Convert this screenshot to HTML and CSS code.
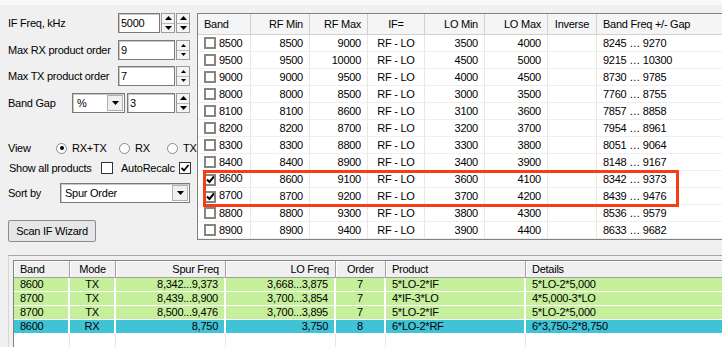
FILE: index.html
```html
<!DOCTYPE html>
<html lang="en">
<head>
    <meta charset="UTF-8">
    <title>Spur Calculator</title>
    <link rel="stylesheet" href="styles.css">
</head>
<body>
    <div class="topstrip"></div>
    <div class="main">
        <div class="side">
            <div class="field">
                <span class="lbl">IF Freq, kHz</span>
                <div class="input w42">5000</div>
                <div class="spin">
                    <div class="spin-btn"><svg width="7" height="4"><path d="M0 4L3.5 0L7 4Z"/></svg></div>
                    <div class="spin-btn"><svg width="7" height="4"><path d="M0 0L3.5 4L7 0Z"/></svg></div>
                </div>
                <div class="spin">
                    <div class="spin-btn"><svg width="7" height="4"><path d="M0 4L3.5 0L7 4Z"/></svg></div>
                    <div class="spin-btn"><svg width="7" height="4"><path d="M0 0L3.5 4L7 0Z"/></svg></div>
                </div>
            </div>
            <div class="field f2">
                <span class="lbl">Max RX product order</span>
                <div class="input w57">9</div>
                <div class="spin">
                    <div class="spin-btn"><svg width="5" height="3"><path d="M0 3L2.5 0L5 3Z"/></svg></div>
                    <div class="spin-btn"><svg width="5" height="3"><path d="M0 0L2.5 3L5 0Z"/></svg></div>
                </div>
            </div>
            <div class="field">
                <span class="lbl">Max TX product order</span>
                <div class="input w57">7</div>
                <div class="spin">
                    <div class="spin-btn"><svg width="5" height="3"><path d="M0 3L2.5 0L5 3Z"/></svg></div>
                    <div class="spin-btn"><svg width="5" height="3"><path d="M0 0L2.5 3L5 0Z"/></svg></div>
                </div>
            </div>
            <div class="field">
                <span class="lbl short">Band Gap</span>
                <div class="select w53">
                    <span class="select-text">%</span>
                    <span class="drop"><svg width="7" height="4"><path d="M0 0L3.5 4L7 0Z"/></svg></span>
                </div>
                <div class="input w48 gap2">3</div>
                <div class="spin gap2">
                    <div class="spin-btn"><svg width="7" height="4"><path d="M0 4L3.5 0L7 4Z"/></svg></div>
                    <div class="spin-btn"><svg width="7" height="4"><path d="M0 0L3.5 4L7 0Z"/></svg></div>
                </div>
            </div>

            <div class="opt-row view-row">
                <span class="view-lbl">View</span>
                <span class="radio on"></span><span class="opt-text w47">RX+TX</span>
                <span class="radio"></span><span class="opt-text w32">RX</span>
                <span class="radio"></span><span class="opt-text">TX</span>
            </div>
            <div class="opt-row check-row">
                <span class="opt-text pad1">Show all products</span>
                <span class="check"></span>
                <span class="opt-text auto">AutoRecalc</span>
                <span class="check on"><svg width="10" height="10"><path d="M1.5 5L4 7.5L8.5 2" fill="none" stroke="#000" stroke-width="1.8"/></svg></span>
            </div>
            <div class="field sort-row">
                <span class="lbl sort">Sort by</span>
                <div class="select w130">
                    <span class="select-text">Spur Order</span>
                    <span class="drop"><svg width="7" height="4"><path d="M0 0L3.5 4L7 0Z"/></svg></span>
                </div>
            </div>
            <button class="wizard">Scan IF Wizard</button>
        </div>

        <div class="bands">
            <table class="bands-table">
                <colgroup>
                    <col style="width:53px"><col style="width:59px"><col style="width:58px"><col style="width:57px">
                    <col style="width:60px"><col style="width:63px"><col style="width:49px"><col style="width:160px">
                </colgroup>
                <thead>
                    <tr>
                        <th class="l">Band</th><th class="r">RF Min</th><th class="r">RF Max</th><th class="c">IF=</th>
                        <th class="r">LO Min</th><th class="r">LO Max</th><th class="c">Inverse</th><th class="l">Band Freq +/- Gap</th>
                    </tr>
                </thead>
                <tbody>
                    <tr><td class="band"><span class="box"></span>8500</td><td class="r">8500</td><td class="r">9000</td><td class="c">RF - LO</td><td class="r">3500</td><td class="r">4000</td><td></td><td class="l">8245 … 9270</td></tr>
                    <tr><td class="band"><span class="box"></span>9500</td><td class="r">9500</td><td class="r">10000</td><td class="c">RF - LO</td><td class="r">4500</td><td class="r">5000</td><td></td><td class="l">9215 … 10300</td></tr>
                    <tr><td class="band"><span class="box"></span>9000</td><td class="r">9000</td><td class="r">9500</td><td class="c">RF - LO</td><td class="r">4000</td><td class="r">4500</td><td></td><td class="l">8730 … 9785</td></tr>
                    <tr><td class="band"><span class="box"></span>8000</td><td class="r">8000</td><td class="r">8500</td><td class="c">RF - LO</td><td class="r">3000</td><td class="r">3500</td><td></td><td class="l">7760 … 8755</td></tr>
                    <tr><td class="band"><span class="box"></span>8100</td><td class="r">8100</td><td class="r">8600</td><td class="c">RF - LO</td><td class="r">3100</td><td class="r">3600</td><td></td><td class="l">7857 … 8858</td></tr>
                    <tr><td class="band"><span class="box"></span>8200</td><td class="r">8200</td><td class="r">8700</td><td class="c">RF - LO</td><td class="r">3200</td><td class="r">3700</td><td></td><td class="l">7954 … 8961</td></tr>
                    <tr><td class="band"><span class="box"></span>8300</td><td class="r">8300</td><td class="r">8800</td><td class="c">RF - LO</td><td class="r">3300</td><td class="r">3800</td><td></td><td class="l">8051 … 9064</td></tr>
                    <tr><td class="band"><span class="box"></span>8400</td><td class="r">8400</td><td class="r">8900</td><td class="c">RF - LO</td><td class="r">3400</td><td class="r">3900</td><td></td><td class="l">8148 … 9167</td></tr>
                    <tr><td class="band"><span class="box on"><svg width="9" height="9"><path d="M1 4.5L3.5 7L8 1.5" fill="none" stroke="#000" stroke-width="2"/></svg></span>8600</td><td class="r">8600</td><td class="r">9100</td><td class="c">RF - LO</td><td class="r">3600</td><td class="r">4100</td><td></td><td class="l">8342 … 9373</td></tr>
                    <tr><td class="band"><span class="box on"><svg width="9" height="9"><path d="M1 4.5L3.5 7L8 1.5" fill="none" stroke="#000" stroke-width="2"/></svg></span>8700</td><td class="r">8700</td><td class="r">9200</td><td class="c">RF - LO</td><td class="r">3700</td><td class="r">4200</td><td></td><td class="l">8439 … 9476</td></tr>
                    <tr><td class="band"><span class="box"></span>8800</td><td class="r">8800</td><td class="r">9300</td><td class="c">RF - LO</td><td class="r">3800</td><td class="r">4300</td><td></td><td class="l">8536 … 9579</td></tr>
                    <tr><td class="band"><span class="box"></span>8900</td><td class="r">8900</td><td class="r">9400</td><td class="c">RF - LO</td><td class="r">3900</td><td class="r">4400</td><td></td><td class="l">8633 … 9682</td></tr>
                </tbody>
            </table>
            <div class="mark"></div>
        </div>
    </div>

    <div class="results">
        <div class="results-grid">
            <table class="spur-table">
                <colgroup>
                    <col style="width:56px"><col style="width:46px"><col style="width:110px"><col style="width:110px">
                    <col style="width:50px"><col style="width:140px"><col style="width:250px">
                </colgroup>
                <thead>
                    <tr>
                        <th class="l">Band</th><th class="c">Mode</th><th class="r">Spur Freq</th><th class="r">LO Freq</th>
                        <th class="c">Order</th><th class="l">Product</th><th class="l">Details</th>
                    </tr>
                </thead>
                <tbody>
                    <tr class="tx"><td class="l">8600</td><td class="c">TX</td><td class="r">8,342...9,373</td><td class="r">3,668...3,875</td><td class="c">7</td><td class="l">5*LO-2*IF</td><td class="l">5*LO-2*5,000</td></tr>
                    <tr class="tx"><td class="l">8700</td><td class="c">TX</td><td class="r">8,439...8,900</td><td class="r">3,700...3,854</td><td class="c">7</td><td class="l">4*IF-3*LO</td><td class="l">4*5,000-3*LO</td></tr>
                    <tr class="tx"><td class="l">8700</td><td class="c">TX</td><td class="r">8,500...9,476</td><td class="r">3,700...3,895</td><td class="c">7</td><td class="l">5*LO-2*IF</td><td class="l">5*LO-2*5,000</td></tr>
                    <tr class="rx"><td class="l">8600</td><td class="c">RX</td><td class="r">8,750</td><td class="r">3,750</td><td class="c">8</td><td class="l">6*LO-2*RF</td><td class="l">6*3,750-2*8,750</td></tr>
                    <tr class="empty"><td></td><td></td><td></td><td></td><td></td><td></td><td></td></tr>
                    <tr class="empty"><td></td><td></td><td></td><td></td><td></td><td></td><td></td></tr>
                </tbody>
            </table>
        </div>
    </div>
</body>
</html>
```

FILE: styles.css
```css
body {
    margin: 0;
    width: 722px;
    height: 347px;
    overflow: hidden;
    background-color: #f0f0f0;
    font-family: "Liberation Sans", Arial, sans-serif;
    font-size: 11px;
    letter-spacing: -0.25px;
    color: #000;
}
.topstrip {
    height: 5px;
    background-color: #f9f9f9;
}
.main {
    display: flex;
    height: 250px;
}

/* left settings panel */
.side {
    width: 197px;
    flex-shrink: 0;
    padding: 8px 0 0 8px;
    box-sizing: border-box;
}
.field {
    display: flex;
    align-items: center;
    height: 20px;
    margin-bottom: 7px;
}
.field.f2 {
    margin-bottom: 6px;
}
.lbl {
    width: 110px;
    flex-shrink: 0;
}
.lbl.short {
    width: 64px;
}
.lbl.sort {
    width: 52px;
}
.input {
    height: 20px;
    box-sizing: border-box;
    background-color: #fff;
    border: 1px solid #7a7a7a;
    box-shadow: inset 1px 1px 0 #c8c8c8;
    padding: 0 2px;
    line-height: 18px;
}
.w42 { width: 42px; }
.w57 { width: 57px; }
.w48 { width: 48px; }
.gap2 { margin-left: 2px; }
.spin {
    display: flex;
    flex-direction: column;
    width: 14px;
    height: 20px;
    margin-left: 1px;
    border: 1px solid #9a9a9a;
    box-sizing: border-box;
    background-color: #f4f4f4;
}
.spin-btn {
    flex: 1;
    display: flex;
    align-items: center;
    justify-content: center;
}
.spin-btn + .spin-btn {
    border-top: 1px solid #b8b8b8;
}
.select {
    display: flex;
    align-items: center;
    height: 20px;
    box-sizing: border-box;
    background-color: #fff;
    border: 1px solid #7a7a7a;
    box-shadow: inset 1px 1px 0 #c8c8c8;
}
.w53 { width: 53px; }
.w130 { width: 130px; }
.select-text {
    flex: 1;
    padding-left: 4px;
}
.drop {
    width: 16px;
    height: 16px;
    margin-right: 1px;
    display: flex;
    align-items: center;
    justify-content: center;
    background-color: #f0f0f0;
    border: 1px solid #b0b0b0;
    box-sizing: border-box;
}
.opt-row {
    display: flex;
    align-items: center;
    height: 16px;
}
.view-row {
    margin-top: 27px;
}
.check-row {
    margin-top: 4px;
    margin-bottom: 7px;
}
.view-lbl {
    width: 48px;
}
.radio {
    width: 11px;
    height: 11px;
    box-sizing: border-box;
    border-radius: 50%;
    border: 1px solid #8a8a8a;
    background-color: #fff;
    margin-right: 5px;
    display: flex;
    align-items: center;
    justify-content: center;
}
.radio.on::after {
    content: "";
    width: 4px;
    height: 4px;
    border-radius: 50%;
    background-color: #000;
}
.opt-text.w47 { width: 47px; }
.opt-text.w32 { width: 32px; }
.opt-text.pad1 { margin-left: 1px; width: 92px; }
.opt-text.auto { margin-left: 8px; width: 58px; }
.check {
    width: 12px;
    height: 12px;
    box-sizing: border-box;
    border: 1px solid #333;
    background-color: #fff;
    display: flex;
    align-items: center;
    justify-content: center;
}
.wizard {
    display: block;
    margin-top: 17px;
    width: 88px;
    height: 22px;
    padding: 0;
    font-family: inherit;
    font-size: 11px;
    letter-spacing: -0.25px;
    color: #000;
    background-color: #e6e6e6;
    border: 1px solid #8c8c8c;
    border-radius: 2px;
}

/* bands grid */
.bands {
    position: relative;
    flex: 1;
    margin-top: 8px;
    height: 227px;
    box-sizing: border-box;
    border: 1px solid #828282;
    border-right: none;
    background-color: #fff;
    overflow: hidden;
}
.bands-table {
    border-collapse: separate;
    border-spacing: 0;
    table-layout: fixed;
    width: 559px;
}
.bands-table th {
    height: 21px;
    padding: 0 6px;
    box-sizing: border-box;
    font-weight: normal;
    background-color: #f5f5f5;
    border-right: 1px solid #d0d0d0;
    border-bottom: 1px solid #d0d0d0;
    white-space: nowrap;
}
.bands-table td {
    height: 17px;
    padding: 0 6px;
    box-sizing: border-box;
    border-right: 1px solid #e8e8e8;
    border-bottom: 1px solid #efefef;
    white-space: nowrap;
}
.l { text-align: left; }
.r { text-align: right; }
.c { text-align: center; }
.bands-table td.band {
    padding-left: 6px;
}
.box {
    display: inline-flex;
    align-items: center;
    justify-content: center;
    vertical-align: -2px;
    width: 12px;
    height: 12px;
    box-sizing: border-box;
    border: 2px solid #858585;
    background-color: #fff;
    margin-right: 3px;
}
.mark {
    position: absolute;
    left: 5px;
    top: 156px;
    width: 476px;
    height: 37px;
    box-sizing: border-box;
    border: 3px solid #f83c14;
}

/* results grid */
.results {
    margin-left: 8px;
    height: 92px;
    box-sizing: border-box;
    border-top: 1px solid #a8a8a8;
    border-left: 1px solid #d6d6d6;
    padding: 4px 0 0 4px;
}
.results-grid {
    height: 100%;
    box-sizing: border-box;
    border: 1px solid #828282;
    border-right: none;
    border-bottom: none;
    background-color: #fff;
    overflow: hidden;
}
.spur-table {
    border-collapse: separate;
    border-spacing: 0;
    table-layout: fixed;
    width: 762px;
}
.spur-table th {
    height: 17px;
    padding: 0 6px;
    box-sizing: border-box;
    font-weight: normal;
    background-color: #f0f0f0;
    border-right: 1px solid #a0a0a0;
    border-bottom: 1px solid #a0a0a0;
    box-shadow: inset 1px 1px 0 #fff;
    white-space: nowrap;
}
.spur-table td {
    height: 14px;
    padding: 0 6px;
    box-sizing: border-box;
    border-right: 2px solid #fff;
    border-bottom: 1px solid #fff;
    white-space: nowrap;
    line-height: 13px;
}
.spur-table tr.tx td {
    background-color: #c6ef9c;
}
.spur-table tr.rx td {
    background-color: #40c3d6;
}
.spur-table tr.empty td {
    border-right: 1px solid #e6e6e6;
}
```
